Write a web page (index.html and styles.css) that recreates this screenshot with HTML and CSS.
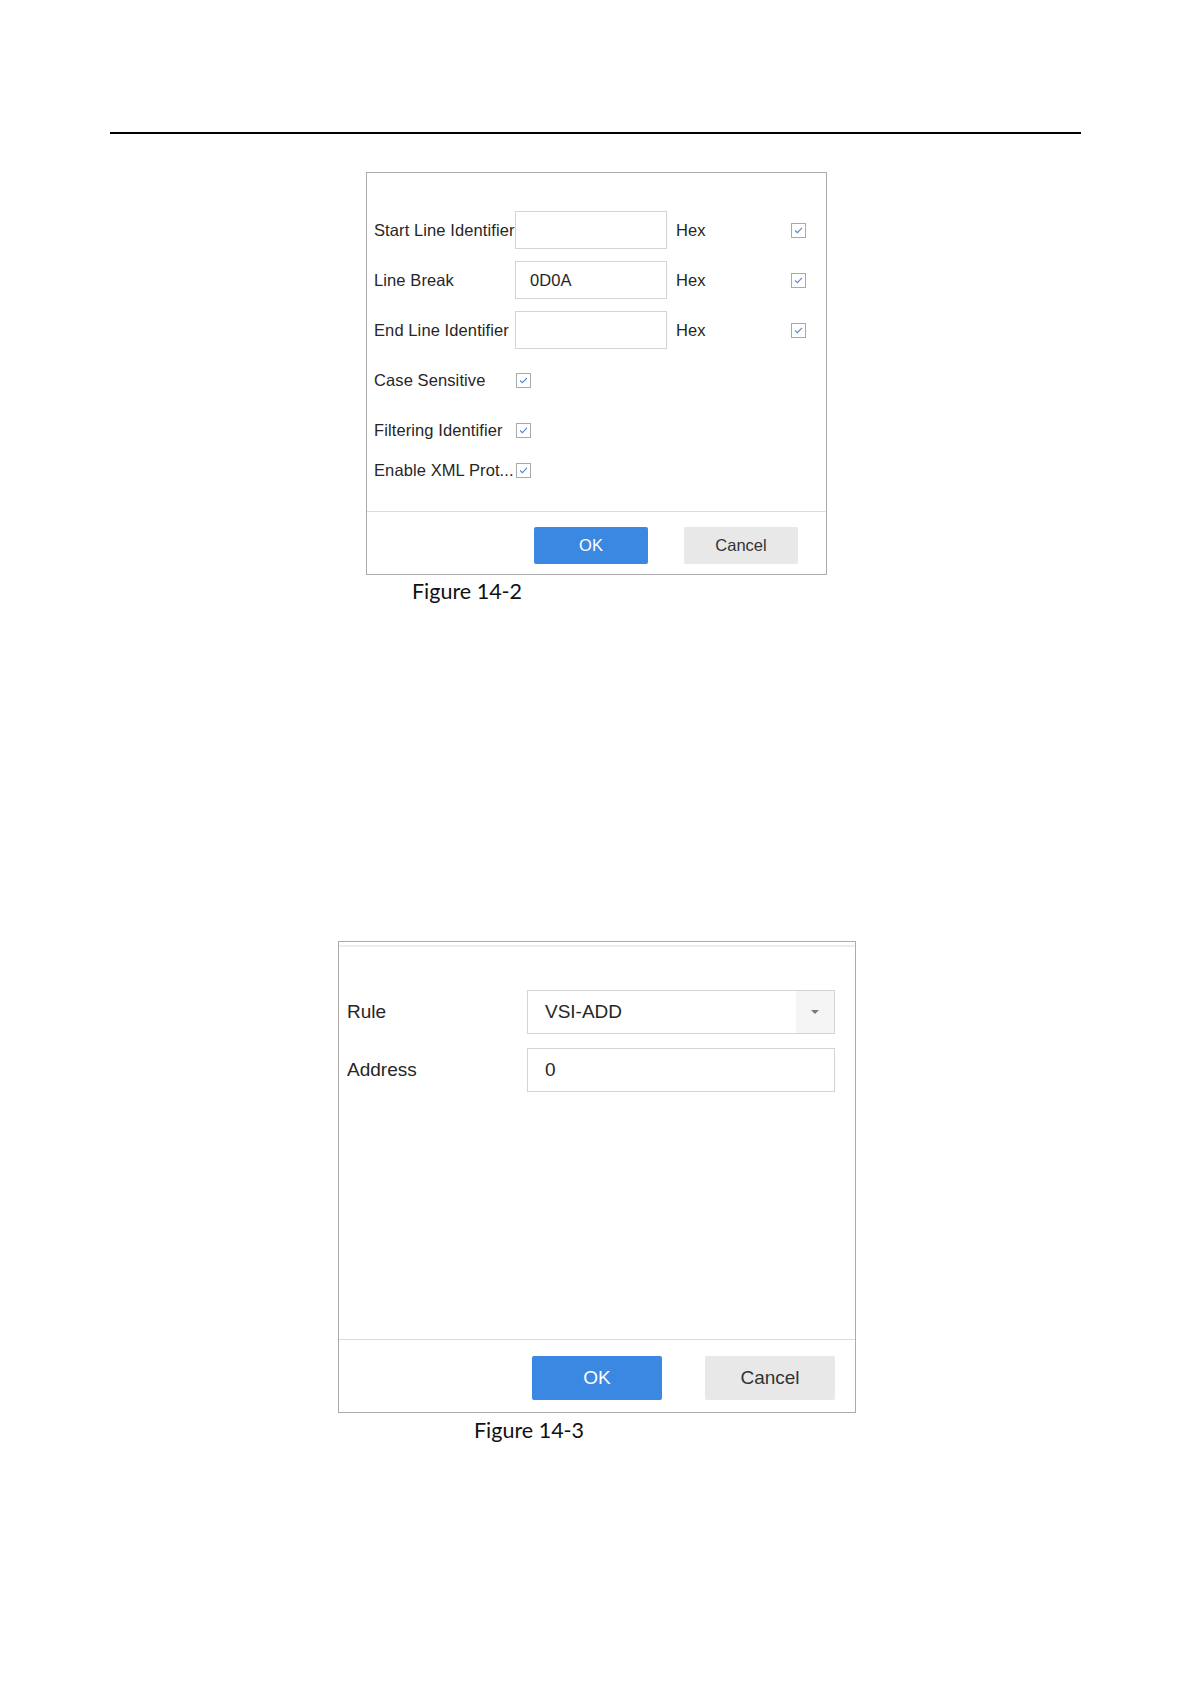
FILE: index.html
```html
<!DOCTYPE html>
<html lang="en">
<head>
    <meta charset="UTF-8">
    <title>Figure 14-2 / 14-3</title>
    <link rel="stylesheet" href="styles.css">
</head>
<body>
    <div class="page">
        <div class="rule"></div>

        <div class="dialog dialog-serial">
            <div class="dialog-body">
                <div class="row">
                    <span class="label">Start Line Identifier</span>
                    <span class="field"></span>
                    <span class="hex">Hex</span>
                    <span class="check"><svg viewBox="0 0 15 15"><polyline points="3.5,7.5 6.2,10 11.5,4.5"/></svg></span>
                </div>
                <div class="row">
                    <span class="label">Line Break</span>
                    <span class="field">0D0A</span>
                    <span class="hex">Hex</span>
                    <span class="check"><svg viewBox="0 0 15 15"><polyline points="3.5,7.5 6.2,10 11.5,4.5"/></svg></span>
                </div>
                <div class="row">
                    <span class="label">End Line Identifier</span>
                    <span class="field"></span>
                    <span class="hex">Hex</span>
                    <span class="check"><svg viewBox="0 0 15 15"><polyline points="3.5,7.5 6.2,10 11.5,4.5"/></svg></span>
                </div>
                <div class="row">
                    <span class="label">Case Sensitive</span>
                    <span class="check check-left"><svg viewBox="0 0 15 15"><polyline points="3.5,7.5 6.2,10 11.5,4.5"/></svg></span>
                </div>
                <div class="row">
                    <span class="label">Filtering Identifier</span>
                    <span class="check check-left"><svg viewBox="0 0 15 15"><polyline points="3.5,7.5 6.2,10 11.5,4.5"/></svg></span>
                </div>
                <div class="row row-short">
                    <span class="label">Enable XML Prot...</span>
                    <span class="check check-left"><svg viewBox="0 0 15 15"><polyline points="3.5,7.5 6.2,10 11.5,4.5"/></svg></span>
                </div>
            </div>
            <div class="dialog-footer">
                <button class="btn btn-ok">OK</button>
                <button class="btn btn-cancel">Cancel</button>
            </div>
        </div>
        <p class="caption caption-first">Figure 14-2</p>

        <div class="dialog dialog-rule">
            <div class="dialog-head"></div>
            <div class="dialog-body">
                <div class="row">
                    <span class="label">Rule</span>
                    <div class="select">
                        <span class="select-value">VSI-ADD</span>
                        <span class="select-arrow"><svg viewBox="0 0 10 6"><polygon points="1,1 9,1 5,5"/></svg></span>
                    </div>
                </div>
                <div class="row">
                    <span class="label">Address</span>
                    <span class="field">0</span>
                </div>
            </div>
            <div class="dialog-footer">
                <button class="btn btn-ok">OK</button>
                <button class="btn btn-cancel">Cancel</button>
            </div>
        </div>
        <p class="caption caption-second">Figure 14-3</p>
    </div>
</body>
</html>
```

FILE: styles.css
```css
body {
    margin: 0;
    padding: 0;
    background-color: #fff;
    font-family: "Liberation Sans", Arial, sans-serif;
    color: #262626;
}

.page {
    padding-top: 132px;
    padding-bottom: 200px;
}

.rule {
    height: 2px;
    margin: 0 110px;
    background-color: #000;
}

/* dialogs */
.dialog {
    box-sizing: border-box;
    border: 1px solid #ababab;
    background-color: #fff;
}

.dialog-footer {
    display: flex;
    justify-content: flex-end;
    border-top: 1px solid #dcdcdc;
}

.btn {
    box-sizing: border-box;
    border: none;
    border-radius: 2px;
    font-family: "Liberation Sans", Arial, sans-serif;
    cursor: pointer;
}

.btn-ok {
    background-color: #3b88e3;
    color: #fff;
}

.btn-cancel {
    background-color: #e8e8e8;
    color: #333;
}

.row {
    display: flex;
    align-items: center;
}

.label {
    white-space: nowrap;
    overflow: hidden;
}

.field {
    box-sizing: border-box;
    display: flex;
    align-items: center;
    border: 1px solid #d4d4d4;
    background-color: #fff;
}

/* figure 14-2 */
.dialog-serial {
    width: 461px;
    margin: 38px 0 0 366px;
    font-size: 16.5px;
    letter-spacing: 0.1px;
}

.dialog-serial .dialog-body {
    padding: 32px 0 26px 7px;
}

.dialog-serial .row {
    height: 50px;
}

.dialog-serial .row-short {
    height: 30px;
}

.dialog-serial .label {
    width: 141px;
}

.dialog-serial .field {
    width: 152px;
    height: 38px;
    padding-left: 14px;
}

.hex {
    width: 115px;
    margin-left: 9px;
}

.check {
    box-sizing: border-box;
    width: 15px;
    height: 15px;
    border: 1px solid #a9a9a9;
    background-color: #fff;
}

.check svg {
    display: block;
    width: 13px;
    height: 13px;
    fill: none;
    stroke: #4f86d6;
    stroke-width: 1.2;
}

.check-left {
    margin-left: 1px;
}

.dialog-serial .dialog-footer {
    gap: 36px;
    padding: 15px 28px 10px 0;
}

.dialog-serial .btn {
    width: 114px;
    height: 37px;
    font-size: 16.5px;
}

/* figure 14-3 */
.dialog-rule {
    width: 518px;
    margin: 337px 0 0 338px;
    font-size: 19px;
}

.dialog-head {
    height: 3px;
    border-bottom: 2px solid #ececec;
}

.dialog-rule .dialog-body {
    height: 392px;
    box-sizing: border-box;
    padding: 43px 20px 0 8px;
}

.dialog-rule .row {
    height: 44px;
    margin-bottom: 14px;
}

.dialog-rule .label {
    width: 180px;
}

.select {
    box-sizing: border-box;
    display: flex;
    width: 308px;
    height: 44px;
    border: 1px solid #d4d4d4;
}

.select-value {
    flex: 1;
    display: flex;
    align-items: center;
    padding-left: 17px;
}

.select-arrow {
    width: 38px;
    display: flex;
    align-items: center;
    justify-content: center;
    background-color: #f5f5f5;
}

.select-arrow svg {
    width: 10px;
    height: 6px;
    fill: #7a7a7a;
}

.dialog-rule .field {
    width: 308px;
    height: 44px;
    padding-left: 17px;
}

.dialog-rule .dialog-footer {
    gap: 43px;
    padding: 16px 20px 12px 0;
}

.dialog-rule .btn {
    width: 130px;
    height: 44px;
    font-size: 19px;
}

/* captions */
.caption {
    margin: 0;
    font-family: Lato, "Open Sans", sans-serif;
    font-size: 21.5px;
    line-height: 26px;
    color: #111;
}

.caption-first {
    margin: 3px 0 0 412px;
}

.caption-second {
    margin: 4px 0 0 474px;
}
```
